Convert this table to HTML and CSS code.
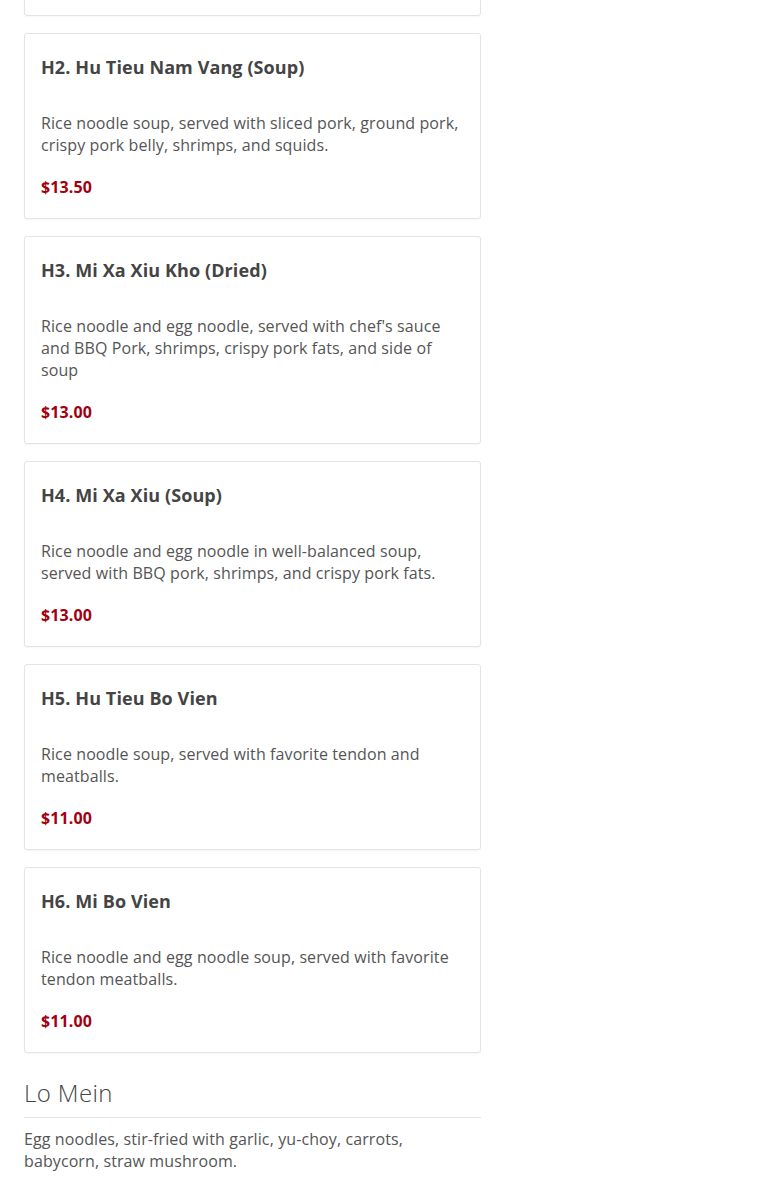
FILE: index.html
```html
<!DOCTYPE html>
<html lang="en">
<head>
<meta charset="utf-8">
<title>Menu</title>
<link rel="stylesheet" href="styles.css">
</head>
<body>
<main class="menu">
  <section class="items">
    <article class="card">
      <h3 class="card-title">H1. Hu Tieu Nam Vang (Dried)</h3>
      <p class="card-desc">Rice noodle, served with sliced pork, ground pork, crispy pork belly, shrimps, and side of soup.</p>
      <p class="card-price">$13.50</p>
    </article>
    <article class="card">
      <h3 class="card-title">H2. Hu Tieu Nam Vang (Soup)</h3>
      <p class="card-desc">Rice noodle soup, served with sliced pork, ground pork, crispy pork belly, shrimps, and squids.</p>
      <p class="card-price">$13.50</p>
    </article>
    <article class="card">
      <h3 class="card-title">H3. Mi Xa Xiu Kho (Dried)</h3>
      <p class="card-desc">Rice noodle and egg noodle, served with chef's sauce and BBQ Pork, shrimps, crispy pork fats, and side of soup</p>
      <p class="card-price">$13.00</p>
    </article>
    <article class="card">
      <h3 class="card-title">H4. Mi Xa Xiu (Soup)</h3>
      <p class="card-desc">Rice noodle and egg noodle in well-balanced soup, served with BBQ pork, shrimps, and crispy pork fats.</p>
      <p class="card-price">$13.00</p>
    </article>
    <article class="card">
      <h3 class="card-title">H5. Hu Tieu Bo Vien</h3>
      <p class="card-desc">Rice noodle soup, served with favorite tendon and meatballs.</p>
      <p class="card-price">$11.00</p>
    </article>
    <article class="card">
      <h3 class="card-title">H6. Mi Bo Vien</h3>
      <p class="card-desc">Rice noodle and egg noodle soup, served with favorite tendon meatballs.</p>
      <p class="card-price">$11.00</p>
    </article>
  </section>
  <section class="category">
    <h2 class="category-title">Lo Mein</h2>
    <p class="category-desc">Egg noodles, stir-fried with garlic, yu-choy, carrots, babycorn, straw mushroom.</p>
  </section>
</main>
</body>
</html>
```

FILE: styles.css
```css
html, body {
  margin: 0;
  padding: 0;
  background: #fff;
}
body {
  font-family: "Open Sans", "Liberation Sans", sans-serif;
  color: #555;
  letter-spacing: 0.1px;
  overflow: hidden;
}
.menu {
  width: 457px;
  margin: -170px 0 0 24px;
}
.items {
  display: flex;
  flex-direction: column;
  gap: 17px;
}
.card {
  border: 1px solid #e4e4e4;
  border-radius: 3px;
  box-shadow: 0 1px 2px rgba(0,0,0,0.04);
  padding: 21px 16px 20px;
  background: #fff;
}
.card-title {
  margin: 0;
  font-size: 18px;
  line-height: 24px;
  font-weight: 700;
  color: #444;
}
.card-desc {
  margin: 33px 0 0;
  font-size: 16px;
  line-height: 22px;
  color: #555;
}
.card-price {
  margin: 20px 0 0;
  font-size: 16px;
  line-height: 22px;
  font-weight: 700;
  color: #a3000f;
}
.category {
  margin-top: 26px;
}
.category-title {
  margin: 0;
  font-size: 24px;
  line-height: 28px;
  font-weight: 300;
  letter-spacing: 0.4px;
  color: #444;
  padding-bottom: 10px;
  border-bottom: 1px solid #e4e4e4;
}
.category-desc {
  margin: 10px 0 0;
  font-size: 16px;
  line-height: 22px;
  color: #555;
}
```
